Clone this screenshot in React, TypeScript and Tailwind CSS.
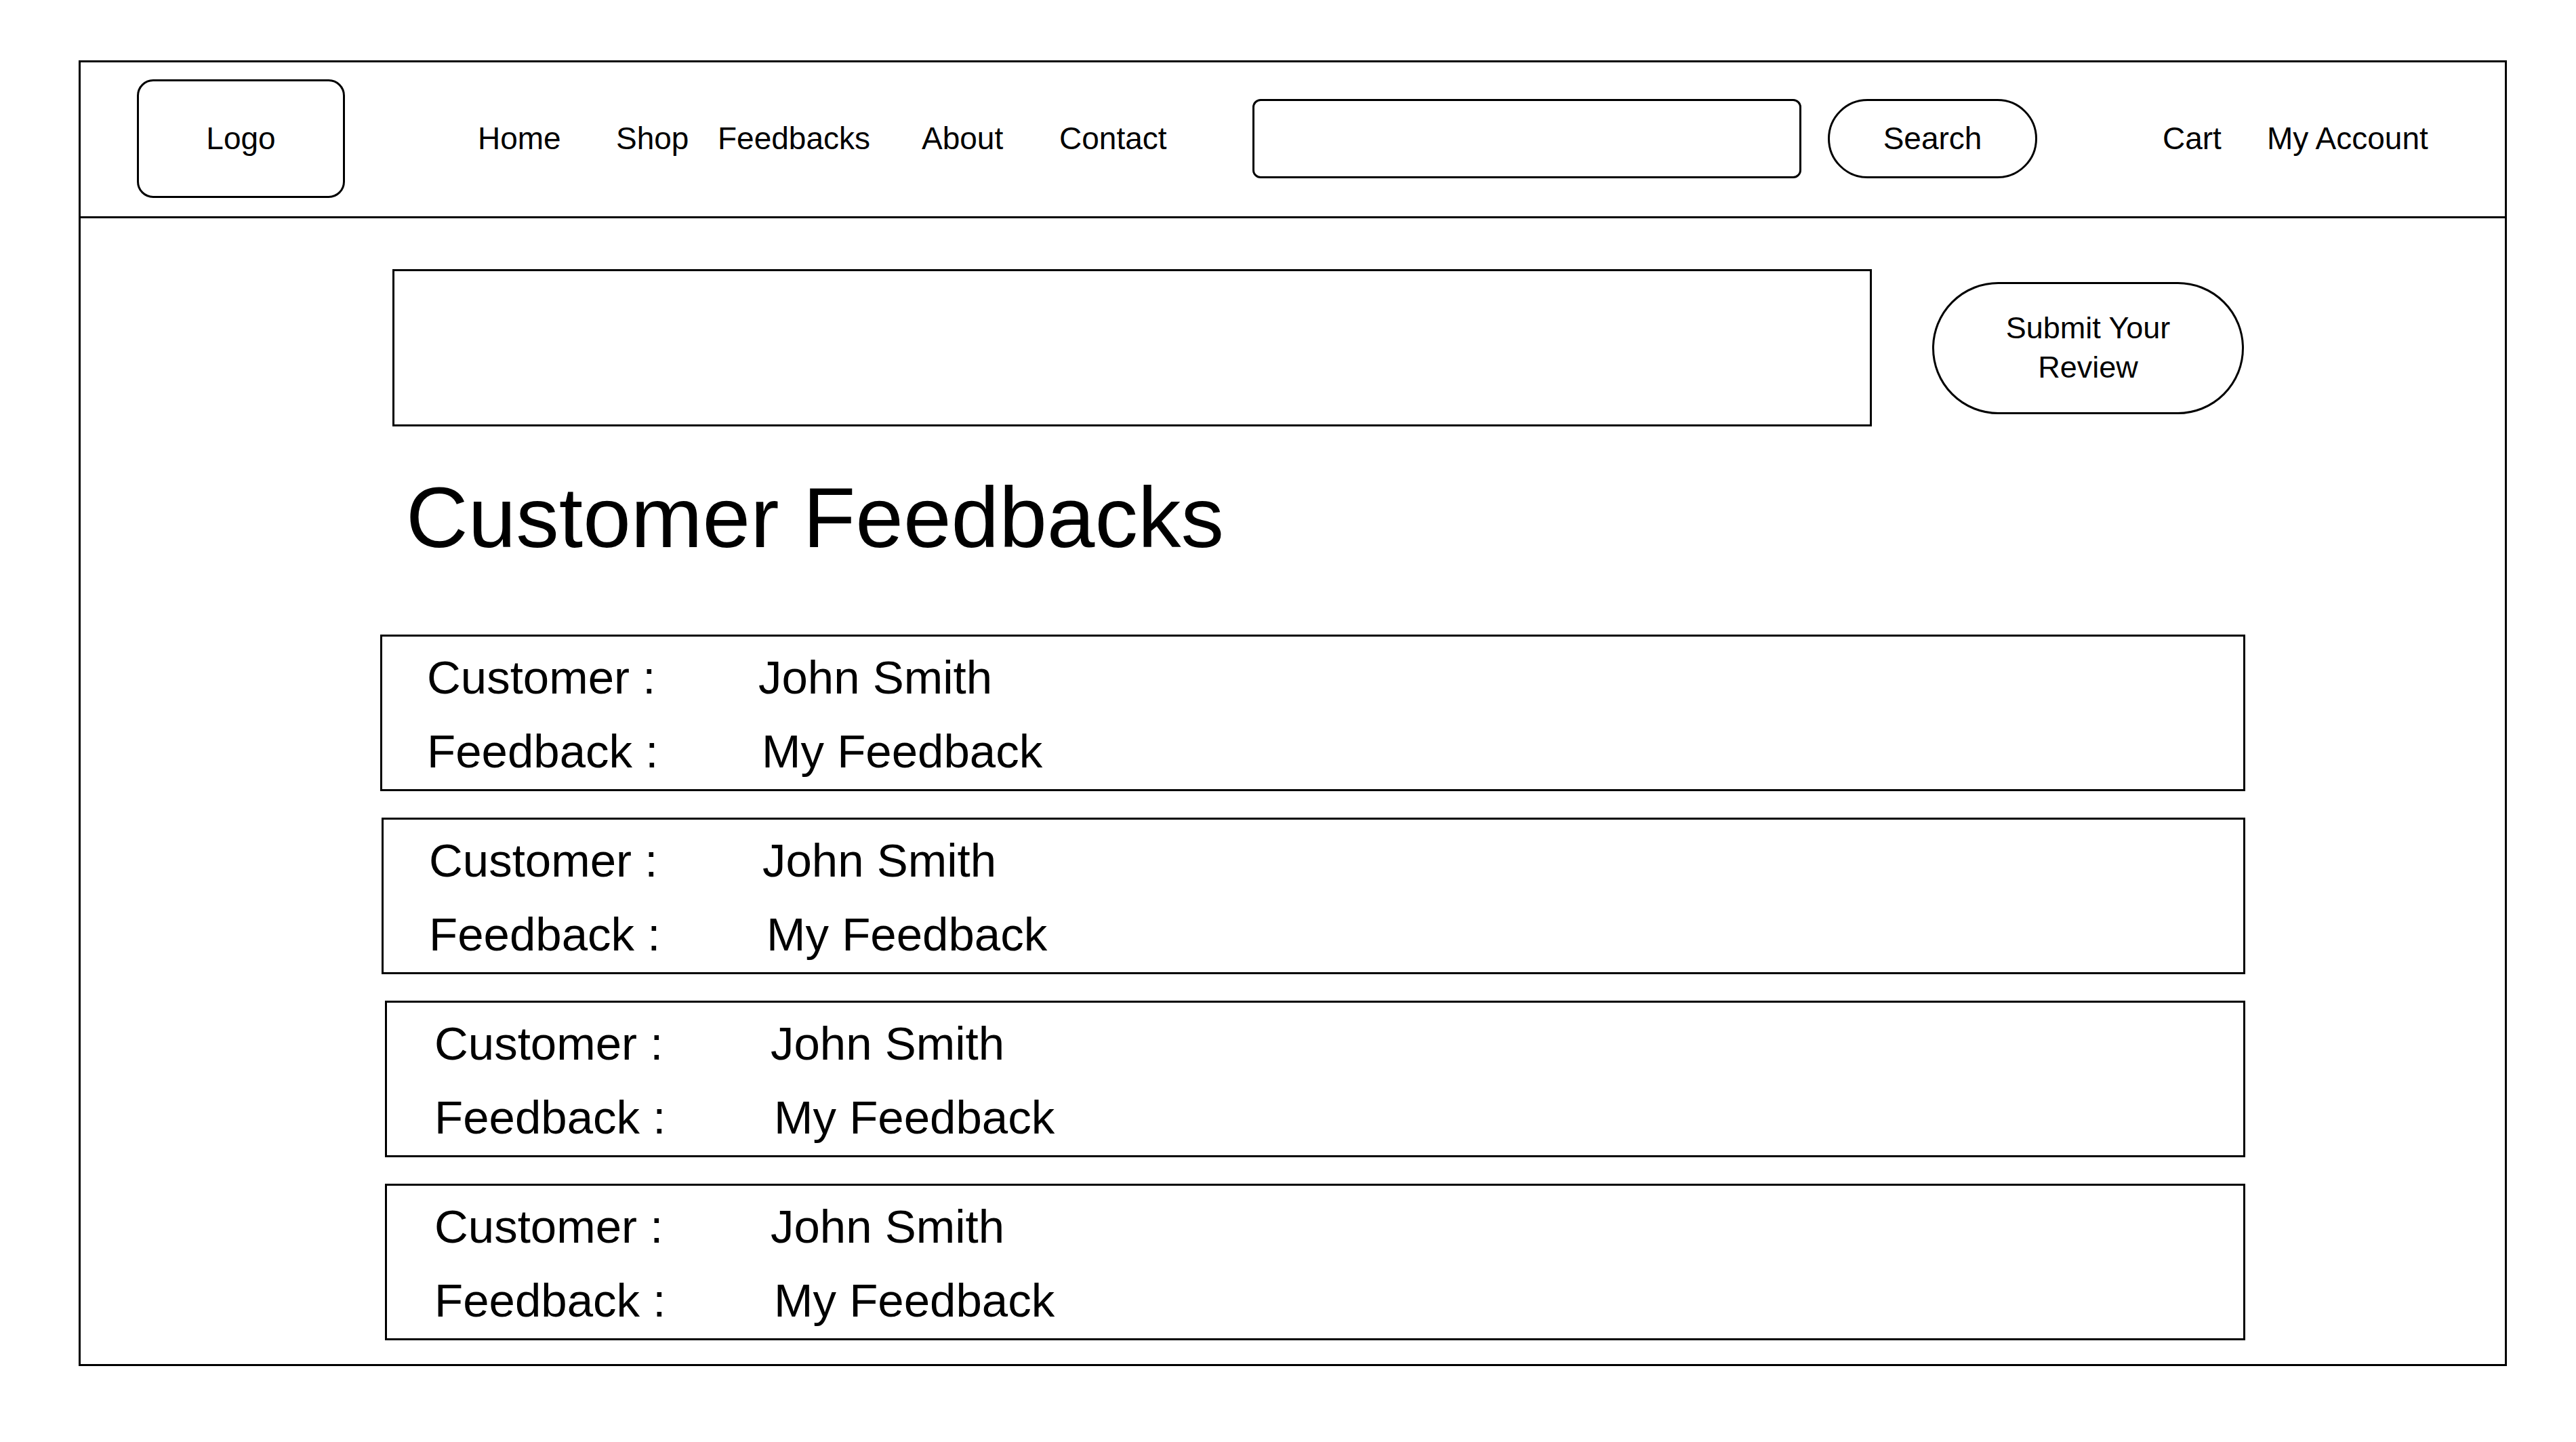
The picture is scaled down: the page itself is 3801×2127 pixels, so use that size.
import React from "react";

type Card = {
  id: number;
  box: string;
  label: string;
  name: string;
  feedback: string;
};

const cards: Card[] = [
  { id: 1, box: "ml-[442px] w-[2752px]", label: "w-[555px] pl-[66px]", name: "ml-0", feedback: "ml-[5px]" },
  { id: 2, box: "ml-[444px] w-[2750px]", label: "w-[559px] pl-[67px]", name: "ml-0", feedback: "ml-[6px]" },
  { id: 3, box: "ml-[449px] w-[2745px]", label: "w-[566px] pl-[70px]", name: "ml-0", feedback: "ml-[5px]" },
  { id: 4, box: "ml-[449px] w-[2745px]", label: "w-[566px] pl-[70px]", name: "ml-0", feedback: "ml-[5px]" },
];

const navLinks = [
  { label: "Home", width: "w-[204px]" },
  { label: "Shop", width: "w-[150px]" },
  { label: "Feedbacks", width: "w-[301px]" },
  { label: "About", width: "w-[203px]" },
  { label: "Contact", width: "w-[285px]" },
];

function FeedbackCard({ card }: { card: Card }) {
  return (
    <div className={`${card.box} h-[231px] border-[3px] border-black pt-[6px]`}>
      <div className="flex h-[109px] items-center leading-[109px]">
        <span className={card.label}>Customer :</span>
        <span className={card.name}>John Smith</span>
      </div>
      <div className="flex h-[109px] items-center leading-[109px]">
        <span className={card.label}>Feedback :</span>
        <span className={card.feedback}>My Feedback</span>
      </div>
    </div>
  );
}

export default function App() {
  return (
    <div className="min-h-screen bg-white pl-[116px] pt-[89px] font-['Liberation_Sans',Arial,sans-serif] text-black">
      <div className="flex h-[1926px] w-[3583px] flex-col border-[3px] border-black">
        {/* header */}
        <header className="flex h-[230px] shrink-0 items-center border-b-[3px] border-black pb-[3px] pl-[83px] text-[46px]">
          <div className="flex h-[175px] w-[307px] items-center justify-center rounded-[24px] border-[3px] border-black">
            Logo
          </div>

          <nav className="ml-[196px] flex items-center">
            {navLinks.map((link) => (
              <a key={link.label} href="#" className={link.width}>
                {link.label}
              </a>
            ))}
          </nav>

          <input
            type="text"
            aria-label="Search"
            className="h-[117px] w-[810px] rounded-[12px] border-[3px] border-black bg-white outline-none"
          />
          <button
            type="button"
            className="ml-[39px] h-[117px] w-[309px] rounded-full border-[3px] border-black bg-white"
          >
            Search
          </button>

          <a href="#" className="ml-[185px] w-[154px]">
            Cart
          </a>
          <a href="#">My Account</a>
        </header>

        {/* main */}
        <main className="flex flex-col pt-[75px]">
          <div className="ml-[460px] flex items-center">
            <div className="h-[232px] w-[2183px] border-[3px] border-black" />
            <button
              type="button"
              className="ml-[89px] flex h-[195px] w-[460px] flex-col items-center justify-center rounded-full border-[3px] border-black bg-white text-[45px] leading-[58px]"
            >
              <span>Submit Your</span>
              <span>Review</span>
            </button>
          </div>

          <h1 className="ml-[480px] mt-[71px] text-[127px] leading-none">
            Customer Feedbacks
          </h1>

          <div className="mt-[109px] flex flex-col gap-[39px] text-[69px]">
            {cards.map((card) => (
              <FeedbackCard key={card.id} card={card} />
            ))}
          </div>
        </main>
      </div>
    </div>
  );
}
